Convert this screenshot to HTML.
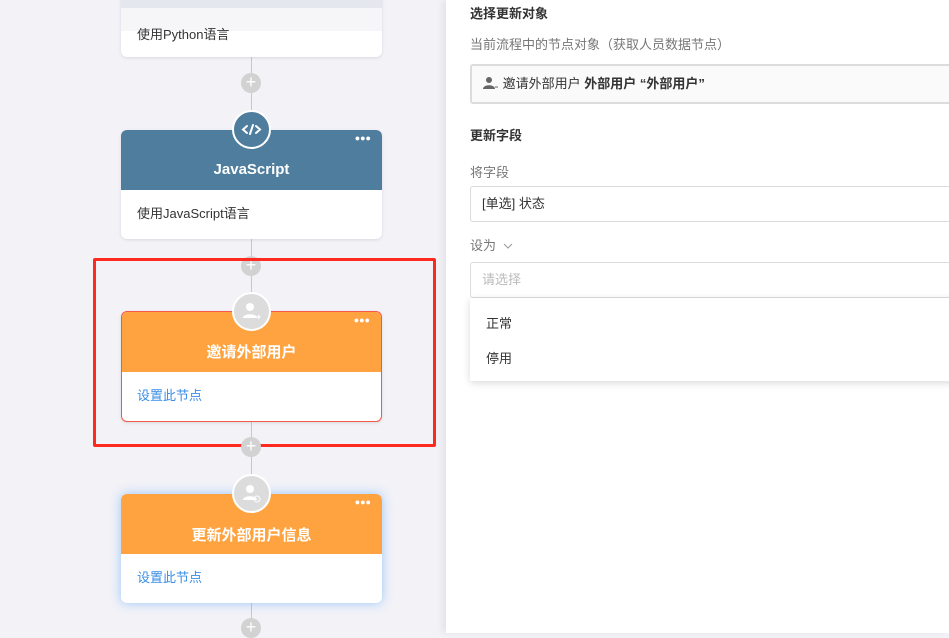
<!DOCTYPE html>
<html><head><meta charset="utf-8"><style>
*{margin:0;padding:0;box-sizing:border-box}
body{width:949px;height:633px;overflow:hidden;position:relative;background:#f2f2f7;font-family:"Liberation Sans","Noto Sans CJK SC",sans-serif;font-size:13px;color:#333}
.abs{position:absolute}
.line{position:absolute;left:251px;width:1px;background:#c8c8c8}
.plus{position:absolute;left:241px;width:20px;height:20px;border-radius:50%;background:#d2d2d2;color:#fff;font-size:18px;line-height:19px;text-align:center}
.card{position:absolute;left:121px;width:261px;background:#fff;border-radius:6px;box-shadow:0 1px 3px rgba(0,0,0,.1);overflow:hidden}
.hd{height:60px;color:#fff;font-weight:bold;font-size:15px;text-align:center;padding-top:30px;position:relative}
.dots{position:absolute;right:11px;top:3px;font-size:9px;letter-spacing:0px;color:#fff}
.bd{padding:0 16px;height:50px;line-height:48px}
.ic{position:absolute;left:232px;width:39px;height:39px;border-radius:50%;border:2px solid #fff;background:#dcdcdc}
.panel{position:absolute;left:446px;top:0;width:503px;height:633px;background:#fff;box-shadow:-4px 0 6px rgba(0,0,0,.06)}
.inp{position:absolute;left:24px;width:490px;border:1px solid #dcdcdc;border-radius:3px;padding-left:11px}
</style></head><body>
<div class="line" style="top:50px;height:580px"></div>
<div class="card" style="top:-20px;height:77px"><div style="height:28px;background:#e4e7ee"></div><div style="position:absolute;top:28px;left:0;right:0;height:23px;background:rgba(244,244,248,.8)"></div><div style="position:absolute;top:44px;left:16px">使用Python语言</div></div>
<div class="plus" style="top:73px">+</div>
<div class="card" style="top:130px;height:109px"><div class="hd" style="background:#4e7d9e;padding-top:31px">JavaScript<span class="dots">●●●</span></div><div class="bd">使用JavaScript语言</div></div>
<div class="ic" style="top:110px;background:#4e7d9e"><svg width="35" height="35" viewBox="0 0 35 35"><path d="M13 14l-4 3.5 4 3.5M22 14l4 3.5-4 3.5M19 13l-3 9" stroke="#fff" stroke-width="2" fill="none" stroke-linecap="round"/></svg></div>
<div class="plus" style="top:256px">+</div>
<div class="abs" style="left:93px;top:258px;width:343px;height:189px;border:3px solid #ff2a1f;border-radius:2px"></div>
<div class="card" style="top:311px;height:111px;border:1px solid #f5574a"><div class="hd" style="background:#ffa340;height:60px;padding-top:29px">邀请外部用户<span class="dots">●●●</span></div><div class="bd" style="color:#3a8ee6;padding-left:15px">设置此节点</div></div>
<div class="ic" style="top:292px"><svg width="35" height="35" viewBox="0 0 35 35"><circle cx="16" cy="13" r="4" fill="#fff"/><path d="M9 24c0-5 14-5 14 0z" fill="#fff"/><path d="M21 23h5m-2-2l2 2-2 2" stroke="#fff" fill="none"/></svg></div>
<div class="plus" style="top:437px">+</div>
<div class="card" style="top:494px;height:109px;box-shadow:0 0 10px rgba(64,158,255,.5)"><div class="hd" style="background:#ffa340">更新外部用户信息<span class="dots">●●●</span></div><div class="bd" style="color:#3a8ee6">设置此节点</div></div>
<div class="ic" style="top:474px"><svg width="35" height="35" viewBox="0 0 35 35"><circle cx="16" cy="13" r="4" fill="#fff"/><path d="M9 24c0-5 14-5 14 0z" fill="#fff"/><circle cx="23" cy="23" r="3" stroke="#fff" fill="none"/></svg></div>
<div class="plus" style="top:618px">+</div>
<div class="panel">
<div class="abs" style="left:24px;top:3px;font-weight:bold">选择更新对象</div>
<div class="abs" style="left:24px;top:34px;color:#777">当前流程中的节点对象（获取人员数据节点）</div>
<div class="inp" style="top:64px;height:40px;background:#fafafa;border-width:2px;line-height:36px;padding-left:11px"><svg width="16" height="12" viewBox="0 0 16 12" style="vertical-align:-1px"><circle cx="6" cy="3" r="3" fill="#666"/><path d="M0 12c0-5 12-5 12 0z" fill="#666"/><path d="M12 10h3" stroke="#666"/></svg> 邀请外部用户 <b>外部用户 “外部用户”</b></div>
<div class="abs" style="left:24px;top:125px;font-weight:bold">更新字段</div>
<div class="abs" style="left:24px;top:162px;color:#777">将字段</div>
<div class="inp" style="top:186px;height:36px;line-height:34px">[单选] 状态</div>
<div class="abs" style="left:24px;top:235px;color:#777">设为 <svg width="10" height="8" viewBox="0 0 10 8" style="margin-left:3px"><path d="M1 2l4 4 4-4" stroke="#999" fill="none"/></svg></div>
<div class="inp" style="top:262px;height:36px;line-height:34px;color:#bbb">请选择</div>
<div class="abs" style="left:24px;top:298px;width:490px;height:83px;background:#fff;box-shadow:0 2px 8px rgba(0,0,0,.15);border-radius:2px"><div style="position:absolute;left:16px;top:15px">正常</div><div style="position:absolute;left:16px;top:50px">停用</div></div>
</div>
</body></html>
